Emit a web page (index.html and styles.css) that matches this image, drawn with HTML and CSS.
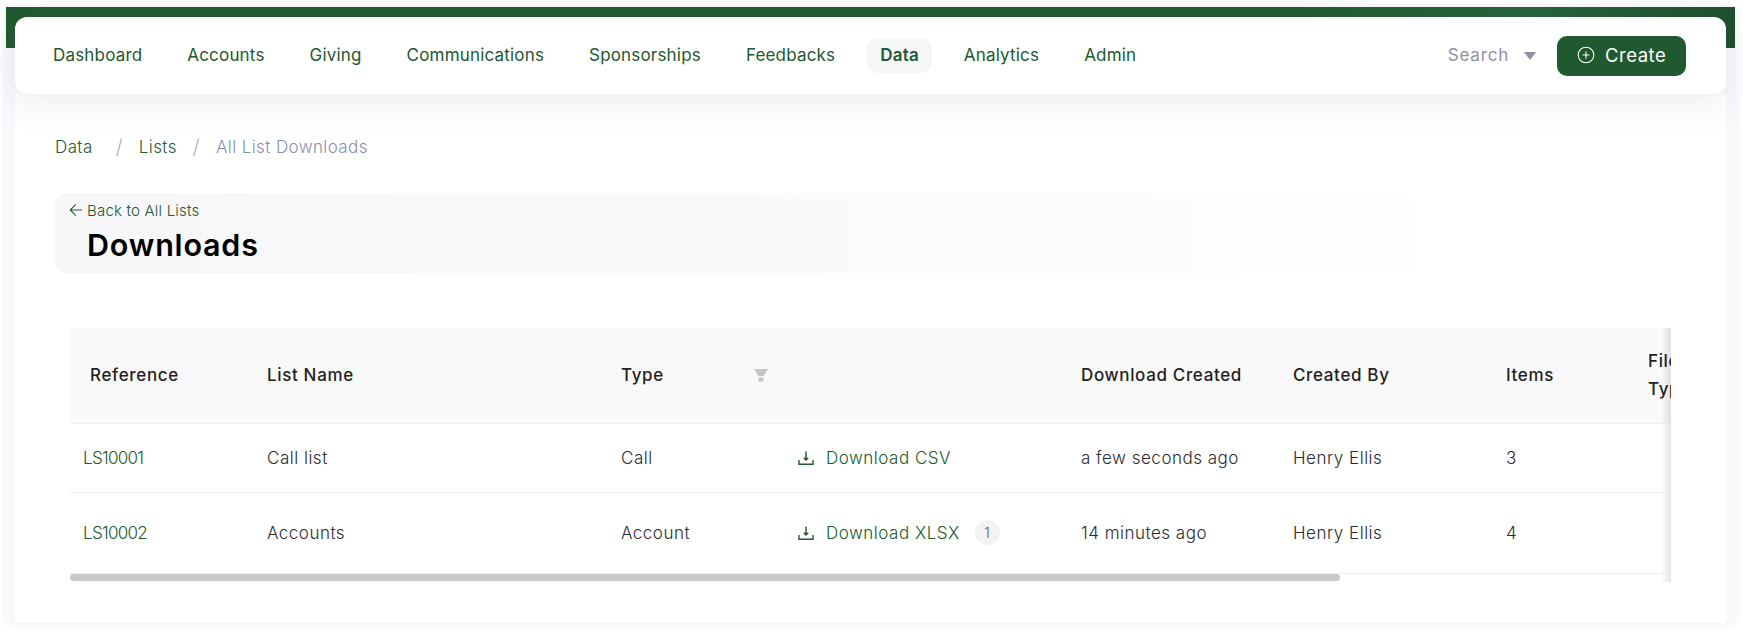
FILE: index.html
```html
<!DOCTYPE html>
<html lang="en">
<head>
  <meta charset="UTF-8" />
  <meta name="viewport" content="width=device-width, initial-scale=1.0" />
  <title>All List Downloads</title>
  <link rel="stylesheet" href="styles.css">
</head>
<body>
  <div class="frame">
    <nav class="topnav">
      <a class="nav-link">Dashboard</a>
      <a class="nav-link">Accounts</a>
      <a class="nav-link">Giving</a>
      <a class="nav-link">Communications</a>
      <a class="nav-link">Sponsorships</a>
      <a class="nav-link">Feedbacks</a>
      <a class="nav-link active">Data</a>
      <a class="nav-link">Analytics</a>
      <a class="nav-link">Admin</a>
      <div class="nav-right">
        <span class="search">Search</span>
        <span class="caret"></span>
        <button class="create">
          <svg width="18" height="18" viewBox="0 0 18 18" fill="none" stroke="#fff" stroke-width="1.1">
            <circle cx="9" cy="9" r="7.8" />
            <path d="M9 5.6v6.8M5.6 9h6.8" />
          </svg>
          Create
        </button>
      </div>
    </nav>

    <main class="panel">
      <div class="crumbs">
        <a>Data</a><span class="sep">/</span><a>Lists</a><span class="sep">/</span><span class="current">All List Downloads</span>
      </div>

      <div class="title-box">
        <a class="back">
          <svg width="14" height="14" viewBox="0 0 14 14" fill="none" stroke="#20592f" stroke-width="1.1">
            <path d="M13 7H1.2M6.8 1.4 1.2 7l5.600 5.600" />
          </svg>
          Back to All Lists
        </a>
        <h1>Downloads</h1>
      </div>

      <div class="table-wrap">
        <table class="grid">
          <colgroup>
            <col class="c1"><col class="c2"><col class="c3"><col class="c4"><col class="c5"><col class="c6"><col class="c7"><col class="c8">
          </colgroup>
          <thead>
            <tr>
              <th>Reference</th>
              <th>List Name</th>
              <th>
                <div class="type-head">Type
                  <svg width="14" height="13" viewBox="0 0 14 13" fill="#c4c4c4"><path d="M0 0h14L9.600 7H4.400zM4.600 8.500h4.800V12.500H4.600z" /></svg>
                </div>
              </th>
              <th></th>
              <th>Download Created</th>
              <th>Created By</th>
              <th>Items</th>
              <th>File Type</th>
            </tr>
          </thead>
          <tbody>
            <tr class="row-a">
              <td><a class="ref">LS10001</a></td>
              <td>Call list</td>
              <td>Call</td>
              <td>
                <a class="dl">
                  <svg class="dl-icon" width="16" height="16" viewBox="0 0 16 16" fill="none" stroke="#20592f" stroke-width="1.4">
                    <path d="M1 10v4.300h14V10M8 1.500v8.500M5.800 7.800 8 10l2.200-2.200" />
                  </svg>
                  Download CSV
                </a>
              </td>
              <td>a few seconds ago</td>
              <td>Henry Ellis</td>
              <td>3</td>
              <td></td>
            </tr>
            <tr class="row-b">
              <td><a class="ref">LS10002</a></td>
              <td>Accounts</td>
              <td>Account</td>
              <td>
                <a class="dl">
                  <svg class="dl-icon" width="16" height="16" viewBox="0 0 16 16" fill="none" stroke="#20592f" stroke-width="1.4">
                    <path d="M1 10v4.300h14V10M8 1.500v8.500M5.800 7.800 8 10l2.200-2.200" />
                  </svg>
                  Download XLSX
                  <span class="count">1</span>
                </a>
              </td>
              <td>14 minutes ago</td>
              <td>Henry Ellis</td>
              <td>4</td>
              <td></td>
            </tr>
          </tbody>
        </table>
        <div class="edge-mask"></div>
        <div class="edge-shadow"></div>
        <div class="scrollbar"><div class="thumb"></div></div>
      </div>
    </main>
  </div>
</body>
</html>
```

FILE: styles.css
```css
* {
  box-sizing: border-box;
}
body {
  margin: 0;
  height: 631px;
  overflow: hidden;
  background-color: #fff;
  font-family: Inter, "Open Sans", sans-serif;
  font-size: 17px;
  letter-spacing: 0.4px;
  color: #2b2b33;
}
a {
  color: inherit;
  text-decoration: none;
}

.frame {
  margin: 7px 8px 0 6px;
  padding: 10px 9px 0 9px;
  height: 616px;
  background-color: #f8f8fd;
  background-image: linear-gradient(90deg, #20592f 74%, #26633a 88%, #1e4f2b 100%);
  background-size: 100% 41px;
  background-repeat: no-repeat;
  box-shadow: 0 0 8px rgba(40, 40, 80, 0.08);
}

.topnav {
  position: relative;
  z-index: 1;
  display: flex;
  align-items: center;
  gap: 45px;
  height: 77px;
  padding: 0 40px 0 38px;
  background-color: #fff;
  border-radius: 12px;
  box-shadow: 0 8px 36px rgba(90, 95, 120, 0.12);
}
.nav-link {
  display: block;
  flex: none;
  margin-bottom: 2px;
  color: #20592f;
  letter-spacing: 0.18px;
}
.nav-link.active {
  margin: 0 -13px;
  padding: 6px 13px;
  height: 35px;
  line-height: 23px;
  font-weight: 600;
  background-color: #f5f6f8;
  border-radius: 10px;
}
.nav-right {
  display: flex;
  align-items: center;
  margin-left: auto;
}
.search {
  margin-bottom: 2px;
  color: #8f8fa6;
  letter-spacing: 0.8px;
}
.caret {
  margin: 0 21px 0 15px;
  border-left: 6.500px solid transparent;
  border-right: 6.500px solid transparent;
  border-top: 8px solid #8f8fa6;
}
.create {
  display: flex;
  align-items: center;
  gap: 10px;
  width: 129px;
  height: 40px;
  padding: 0 0 2px 20px;
  border: 0;
  border-radius: 10px;
  background-color: #20592f;
  color: #fff;
  font: inherit;
  font-size: 18.500px;
  letter-spacing: 0.5px;
}

.panel {
  height: 529px;
  padding: 41px 40px 0;
  background-color: #fff;
}

.crumbs {
  display: flex;
  align-items: center;
  height: 24px;
  color: #1f5a3a;
  font-weight: 300;
}
.crumbs a:first-child {
  margin-right: 7px;
}
.sep {
  margin: 0 16px;
  color: #8f8fa6;
  font-size: 20px;
  font-weight: 200;
}
.current {
  color: #8a8fb0;
}

.title-box {
  margin-top: 34px;
  height: 80px;
  padding: 8px 14px;
  border-radius: 12px;
  background: linear-gradient(90deg, #f7f7fa, #f9f9fb 40%, #fff 88%);
}
.back {
  display: flex;
  align-items: center;
  gap: 4px;
  height: 18px;
  color: #20592f;
  font-size: 15px;
  font-weight: 300;
  letter-spacing: 0.2px;
}
.title-box h1 {
  margin: 8px 0 0 18px;
  color: #000;
  font-size: 30.500px;
  line-height: 36px;
  font-weight: 600;
  letter-spacing: 0.8px;
}

.table-wrap {
  position: relative;
  width: 1601px;
  height: 254px;
  margin: 55px 0 0 15px;
  overflow: hidden;
}
.grid {
  width: 1632px;
  table-layout: fixed;
  border-collapse: collapse;
}
.c1 { width: 181px; }
.c2 { width: 354px; }
.c3 { width: 177px; }
.c4 { width: 283px; }
.c5 { width: 212px; }
.c6 { width: 213px; }
.c7 { width: 142px; }
.c8 { width: 70px; }

.grid th {
  height: 95px;
  padding: 0 16px;
  background-color: #f9f9f9;
  border-bottom: 1px solid #eeeeee;
  text-align: left;
  font-weight: 500;
  line-height: 28px;
  letter-spacing: 0.65px;
  color: #222;
}
.grid th:first-child {
  padding-left: 20px;
}
.grid td {
  padding: 0 16px;
  border-bottom: 1px solid #eeeeee;
  font-weight: 300;
  letter-spacing: 0.5px;
  white-space: nowrap;
}
.grid td:first-child {
  padding-left: 13px;
}
.row-a td {
  height: 69px;
}
.row-b td {
  height: 81px;
}
.type-head {
  display: flex;
  align-items: center;
  justify-content: space-between;
  margin-right: -2px;
}
.ref,
.dl {
  color: #20592f;
}
.ref {
  letter-spacing: -0.7px;
}
.dl {
  display: flex;
  align-items: center;
}
.dl-icon {
  margin-right: 12px;
}
.count {
  display: inline-block;
  width: 25px;
  height: 25px;
  margin-left: 15px;
  line-height: 25px;
  text-align: center;
  font-size: 14px;
  border-radius: 50%;
  background-color: #f3f3f5;
  color: #55555f;
}

/* row lines stop short of the right edge, header does not */
.edge-mask {
  position: absolute;
  top: 95px;
  right: 0;
  bottom: 0;
  width: 7px;
  background-color: #fff;
}
.edge-shadow {
  position: absolute;
  top: 0;
  right: 0;
  bottom: 0;
  width: 10px;
  background-image: linear-gradient(90deg, rgba(0, 0, 0, 0), rgba(0, 0, 0, 0.1));
}
.scrollbar {
  position: absolute;
  left: 0;
  bottom: 1px;
  width: 100%;
  height: 7px;
}
.thumb {
  width: 1270px;
  height: 100%;
  border-radius: 4px;
  background-color: #c8c8c8;
}
```
